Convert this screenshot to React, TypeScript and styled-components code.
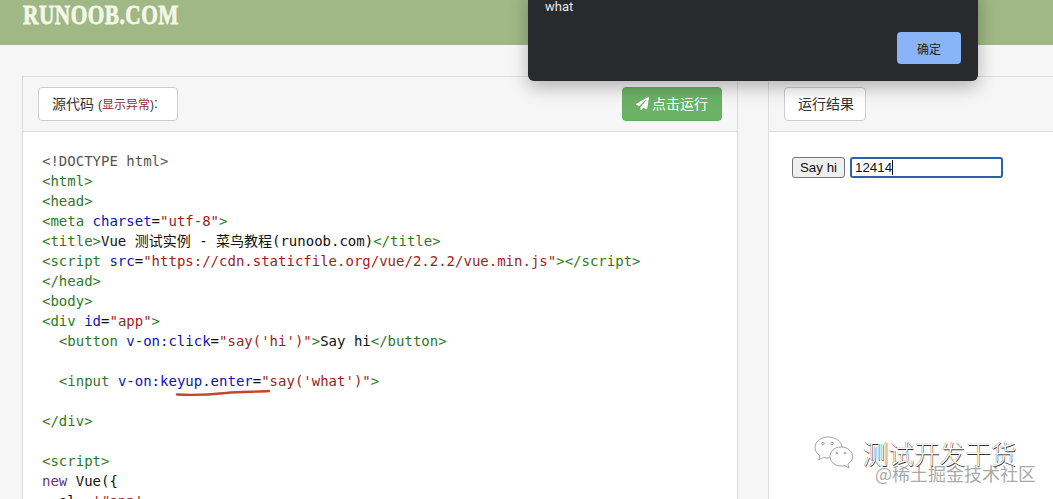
import React from "react";
import styled, { createGlobalStyle } from "styled-components";
import { FaPaperPlane } from "react-icons/fa";

const UI_FONT = `"Liberation Sans", Arial, "Noto Sans CJK SC", sans-serif`;
const MONO_FONT = `"DejaVu Sans Mono", "Noto Sans CJK SC", monospace`;

const Global = createGlobalStyle`
  html, body { margin: 0; padding: 0; height: 499px; overflow: hidden; background: #f6f6f6; }
  * { box-sizing: border-box; }
`;

const Page = styled.div`
  position: relative;
  width: 1053px;
  height: 499px;
  overflow: hidden;
  display: flex;
  flex-direction: column;
  font-family: ${UI_FONT};
  background: #f6f6f6;
`;

const TopBar = styled.header`
  height: 45px;
  flex: none;
  background: #9fb886;
  padding: 0 0 0 23px;
`;

const Logo = styled.div`
  font-family: "Liberation Serif", serif;
  font-weight: 700;
  font-size: 27px;
  line-height: 30px;
  letter-spacing: 0.6px;
  color: #f4f7e8;
  -webkit-text-stroke: 0.8px #f4f7e8;
  white-space: nowrap;
  transform: scaleX(0.79);
  transform-origin: left center;
`;

const Main = styled.main`
  flex: 1;
  min-height: 0;
  display: flex;
  gap: 30px;
  padding: 31px 0 0 22px;
`;

const Panel = styled.section<{ $wide?: boolean }>`
  width: ${(p) => (p.$wide ? "716px" : "300px")};
  flex: none;
  display: flex;
  flex-direction: column;
  border: 1px solid #dddddd;
  border-bottom: none;
  background: #fff;
  overflow: hidden;
`;

const PanelHead = styled.div`
  height: 55px;
  flex: none;
  display: flex;
  justify-content: space-between;
  align-items: flex-start;
  padding: 10px 15px;
  background: #f6f6f6;
  border-bottom: 1px solid #dddddd;
`;

const Tag = styled.div<{ $w: number }>`
  width: ${(p) => p.$w}px;
  height: 34px;
  display: flex;
  align-items: center;
  padding: 0 0 2px 13px;
  background: #fff;
  border: 1px solid #cccccc;
  border-radius: 4px;
  color: #333;
  font-size: 14px;
  white-space: nowrap;
`;

const Small = styled.small`
  font-size: 12px;
  margin-left: 4px;
`;

const Warn = styled.span`
  color: #8a2c3c;
`;

const RunButton = styled.button`
  width: 100px;
  height: 34px;
  display: flex;
  align-items: center;
  justify-content: center;
  gap: 3px;
  padding: 0 0 2px;
  background: #6cb266;
  color: #fff;
  border: 1px solid #66ad60;
  border-radius: 4px;
  font-family: ${UI_FONT};
  font-size: 14px;
`;

const Code = styled.pre`
  margin: 0;
  flex: 1;
  padding: 19px 0 0 19px;
  font-family: ${MONO_FONT};
  font-size: 14px;
  line-height: 20px;
  color: #111;
  overflow: hidden;
`;

const Meta = styled.span`color: #555;`;
const T = styled.span`color: #2b7a1f;`;
const A = styled.span`color: #0f12b5;`;
const S = styled.span`color: #a01c1c;`;
const K = styled.span`color: #70307f;`;

const Marked = styled.span`
  position: relative;
`;

const Squiggle = styled.svg`
  position: absolute;
  left: 16px;
  top: 15px;
  width: 94px;
  height: 8px;
  overflow: visible;
`;

const Result = styled.div`
  flex: 1;
  display: flex;
  align-items: flex-start;
  gap: 5px;
  padding: 25px 0 0 23px;
`;

const SayHi = styled.button`
  width: 53px;
  height: 21px;
  padding: 0 0 1px;
  font-family: ${UI_FONT};
  font-size: 13.33px;
  color: #111;
  background: #efefef;
  border: 1px solid #767676;
  border-radius: 3px;
`;

const Field = styled.div`
  width: 153px;
  height: 21px;
  display: flex;
  align-items: center;
  padding: 0 0 1px 3px;
  border: 2px solid #2c60b4;
  border-radius: 3px;
  background: #fff;
  font-size: 13.33px;
  color: #111;
`;

const Caret = styled.span`
  width: 1px;
  height: 15px;
  background: #111;
`;

const Dialog = styled.div`
  position: absolute;
  left: 528px;
  top: -10px;
  width: 450px;
  height: 91px;
  background: #292a2d;
  border-radius: 0 0 6px 6px;
  box-shadow: 0 6px 18px rgba(0, 0, 0, 0.28);
  padding: 9px 17px 0;
  display: flex;
  flex-direction: column;
  color: #e8eaed;
  font-family: "Roboto", ${UI_FONT};
  font-size: 13px;
`;

const DialogText = styled.div`
  line-height: 15px;
`;

const OkButton = styled.button`
  align-self: flex-end;
  margin-top: 18px;
  width: 64px;
  height: 32px;
  padding: 0;
  border: none;
  border-radius: 4px;
  background: #8ab4f8;
  color: #202124;
  font-family: ${UI_FONT};
  font-size: 12px;
`;

const Watermark = styled.div`
  position: absolute;
  right: 17px;
  top: 436px;
  width: 222px;
`;

const Brand = styled.div`
  display: flex;
  align-items: center;
  gap: 8px;
`;

const BrandName = styled.span`
  font-family: "Noto Sans CJK SC", sans-serif;
  font-weight: 300;
  font-size: 25.6px;
  line-height: 24px;
  white-space: nowrap;
  color: #fff;
  text-shadow: 0.5px 0.5px 0.5px #333, -0.5px 0 0.5px #888;
`;

const Credit = styled.div`
  margin: -5px 0 0 61px;
  font-family: "Noto Sans CJK SC", sans-serif;
  font-size: 18px;
  line-height: 17px;
  white-space: nowrap;
  color: rgba(130, 130, 130, 0.7);
`;

function WeChat() {
  return (
    <svg width="41" height="34" viewBox="0 0 41 34" fill="#fff" stroke="#8a8a8a" strokeWidth="0.8">
      <path d="M14 1C6.500 1 1 5.800 1 11.500c0 3.400 2 6.300 5 8.300l-1.300 4 4.700-2.400c1.500.4 3 .6 4.600.6C22 22 28 17 28 11.500 28 5.800 21.500 1 14 1z" />
      <path d="M27 11C20 11 16 15.600 16 20.500 16 25.500 20.500 30 27 30c1.300 0 2.500-.2 3.700-.5l4.300 2.500-1.100-3.700c2.800-1.800 4.600-4.600 4.600-7.800C38.500 15.600 34 11 27 11z" />
      <circle cx="9" cy="7.500" r="1.300" />
      <circle cx="18" cy="7.500" r="1.300" />
      <circle cx="23" cy="17" r="1" />
      <circle cx="31" cy="17" r="1" />
    </svg>
  );
}

export default function App() {
  return (
    <Page>
      <Global />
      <TopBar>
        <Logo>RUNOOB.COM</Logo>
      </TopBar>
      <Main>
        <Panel $wide>
          <PanelHead>
            <Tag $w={140}>
              源代码
              <Small>
                (<Warn>显示异常</Warn>)
              </Small>
              :
            </Tag>
            <RunButton>
              <FaPaperPlane size={13} />
              点击运行
            </RunButton>
          </PanelHead>
          <Code>
            <Meta>{"<!DOCTYPE html>"}</Meta>{"\n"}
            <T>{"<html>"}</T>{"\n"}
            <T>{"<head>"}</T>{"\n"}
            <T>{"<meta "}</T><A>charset</A>=<S>"utf-8"</S><T>{">"}</T>{"\n"}
            <T>{"<title>"}</T>Vue 测试实例 - 菜鸟教程(runoob.com)<T>{"</title>"}</T>{"\n"}
            <T>{"<script "}</T><A>src</A>=<S>"https://cdn.staticfile.org/vue/2.2.2/vue.min.js"</S><T>{">"}</T><T>{"</script>"}</T>{"\n"}
            <T>{"</head>"}</T>{"\n"}
            <T>{"<body>"}</T>{"\n"}
            <T>{"<div "}</T><A>id</A>=<S>"app"</S><T>{">"}</T>{"\n"}
            {"  "}<T>{"<button "}</T><A>v-on:click</A>=<S>"say('hi')"</S><T>{">"}</T>Say hi<T>{"</button>"}</T>{"\n"}
            {"\n"}
            {"  "}<T>{"<input "}</T><A>v-on:</A>
            <Marked>
              <A>keyup.enter</A>=
              <Squiggle viewBox="0 0 94 8">
                <path d="M1 6.500C20 7.500 35 6.500 50 5C65 3.500 80 4 93 3" fill="none" stroke="#c8452c" strokeWidth="2.400" strokeLinecap="round" />
              </Squiggle>
            </Marked>
            <S>"say('what')"</S><T>{">"}</T>{"\n"}
            {"\n"}
            <T>{"</div>"}</T>{"\n"}
            {"\n"}
            <T>{"<script>"}</T>{"\n"}
            <K>new</K> Vue({"{"}{"\n"}
            {"  el: "}<S>'#app'</S>,
          </Code>
        </Panel>
        <Panel>
          <PanelHead>
            <Tag $w={82}>运行结果</Tag>
          </PanelHead>
          <Result>
            <SayHi>Say hi</SayHi>
            <Field>
              12414
              <Caret />
            </Field>
          </Result>
        </Panel>
      </Main>
      <Dialog>
        <DialogText>what</DialogText>
        <OkButton>确定</OkButton>
      </Dialog>
      <Watermark>
        <Brand>
          <WeChat />
          <BrandName>测试开发干货</BrandName>
        </Brand>
        <Credit>@稀土掘金技术社区</Credit>
      </Watermark>
    </Page>
  );
}
